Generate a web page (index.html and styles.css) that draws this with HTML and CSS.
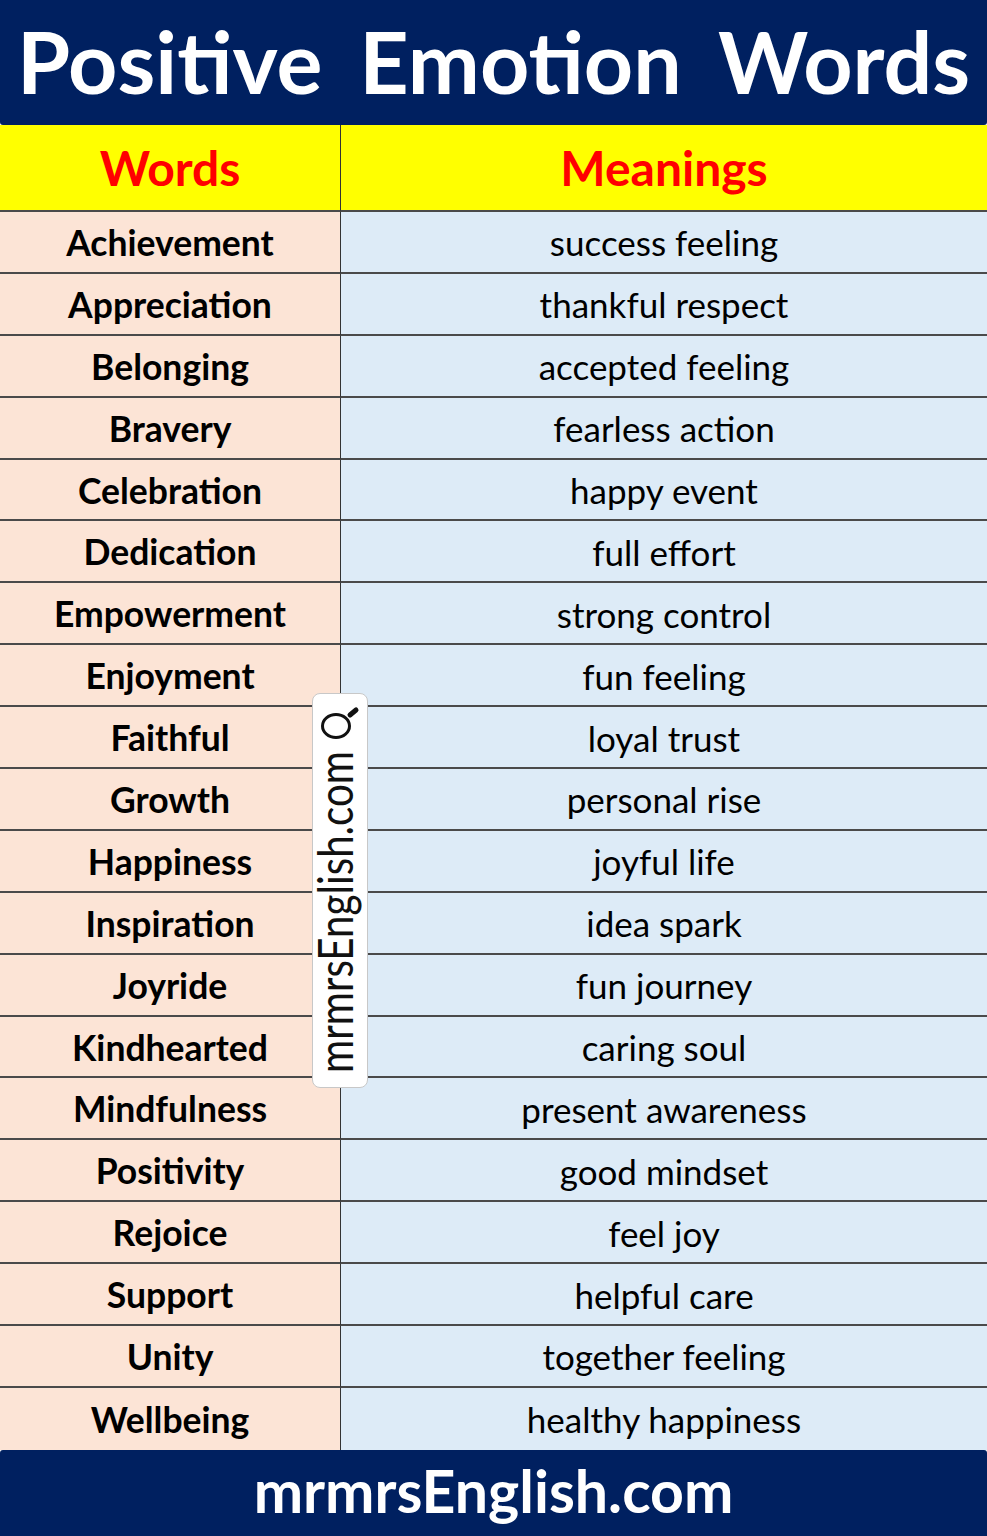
FILE: index.html
```html
<!DOCTYPE html>
<html lang="en">
<head>
<meta charset="utf-8">
<title>Positive Emotion Words</title>
<link rel="stylesheet" href="styles.css">
</head>
<body>
<div class="page">
  <header class="banner">
    <h1 class="title">Positive Emotion Words</h1>
  </header>
  <section class="table">
    <div class="cell head word">Words</div>
    <div class="cell head meaning">Meanings</div>

    <div class="cell word">Achievement</div><div class="cell meaning">success feeling</div>
    <div class="cell word">Appreciation</div><div class="cell meaning">thankful respect</div>
    <div class="cell word">Belonging</div><div class="cell meaning">accepted feeling</div>
    <div class="cell word">Bravery</div><div class="cell meaning">fearless action</div>
    <div class="cell word">Celebration</div><div class="cell meaning">happy event</div>
    <div class="cell word">Dedication</div><div class="cell meaning">full effort</div>
    <div class="cell word">Empowerment</div><div class="cell meaning">strong control</div>
    <div class="cell word">Enjoyment</div><div class="cell meaning">fun feeling</div>
    <div class="cell word">Faithful</div><div class="cell meaning">loyal trust</div>
    <div class="cell word">Growth</div><div class="cell meaning">personal rise</div>
    <div class="cell word">Happiness</div><div class="cell meaning">joyful life</div>
    <div class="cell word">Inspiration</div><div class="cell meaning">idea spark</div>
    <div class="cell word">Joyride</div><div class="cell meaning">fun journey</div>
    <div class="cell word">Kindhearted</div><div class="cell meaning">caring soul</div>
    <div class="cell word">Mindfulness</div><div class="cell meaning">present awareness</div>
    <div class="cell word">Positivity</div><div class="cell meaning">good mindset</div>
    <div class="cell word">Rejoice</div><div class="cell meaning">feel joy</div>
    <div class="cell word">Support</div><div class="cell meaning">helpful care</div>
    <div class="cell word">Unity</div><div class="cell meaning">together feeling</div>
    <div class="cell word last">Wellbeing</div><div class="cell meaning last">healthy happiness</div>

    <div class="watermark">
      <svg class="wm-svg" width="55" height="394" viewBox="0 0 55 394" aria-label="mrmrsEnglish.com">
        <text class="wm-text" transform="translate(40 379) rotate(-90) scale(1 1.35)" x="0" y="0" textLength="322" lengthAdjust="spacingAndGlyphs">mrmrsEnglish.com</text>
        <ellipse cx="23" cy="32" rx="13.5" ry="11.5" fill="none" stroke="#111" stroke-width="3"/>
        <line x1="37" y1="21" x2="43" y2="16" stroke="#111" stroke-width="5" stroke-linecap="round"/>
      </svg>
    </div>
  </section>
  <footer class="footer">mrmrsEnglish.com</footer>
</div>
</body>
</html>
```

FILE: styles.css
```css
* { box-sizing: border-box; }

html, body {
  margin: 0;
  padding: 0;
  background: #ffffff;
}

.page {
  width: 987px;
  height: 1536px;
  display: flex;
  flex-direction: column;
  font-family: Lato, "Open Sans", sans-serif;
}

.banner {
  height: 125px;
  background: #002060;
  border-radius: 0 0 3px 3px;
  display: flex;
  align-items: center;
  justify-content: center;
  padding-bottom: 4px;
}

.title {
  margin: 0;
  color: #ffffff;
  font-family: Lato, sans-serif;
  font-weight: 700;
  font-size: 86px;
  letter-spacing: 0;
  word-spacing: 16px;
  line-height: 1;
  white-space: nowrap;
}

.table {
  position: relative;
  display: grid;
  grid-template-columns: 341px 1fr;
  grid-template-rows: 87px repeat(20, 61.9px);
}

.cell {
  display: flex;
  align-items: center;
  justify-content: center;
  border-bottom: 2px solid #4a4a4a;
  color: #000000;
  white-space: nowrap;
  padding-top: 1px;
}

.cell.last { border-bottom: none; }

.cell.word {
  background: #fce4d6;
  border-right: 1.5px solid #333333;
  font-weight: 700;
  font-size: 35.5px;
}

.cell.meaning {
  background: #ddebf7;
  font-weight: 400;
  font-size: 35px;
}

.cell.head {
  background: #ffff00;
  color: #ff0000;
  font-weight: 700;
  font-size: 48px;
  padding-top: 0;
}

.watermark {
  position: absolute;
  left: 312px;
  top: 568px;
  width: 56px;
  height: 395px;
  background: #ffffff;
  border: 1px solid #c8c8c8;
  border-radius: 8px;
}

.wm-svg {
  display: block;
  overflow: visible;
}

.wm-text {
  font-family: Lato, sans-serif;
  font-size: 36px;
  fill: #111111;
}

.footer {
  flex: 1;
  background: #002060;
  color: #ffffff;
  font-weight: 700;
  font-size: 59px;
  display: flex;
  align-items: center;
  justify-content: center;
  border-radius: 3px 3px 0 0;
  padding-bottom: 4px;
}
```
